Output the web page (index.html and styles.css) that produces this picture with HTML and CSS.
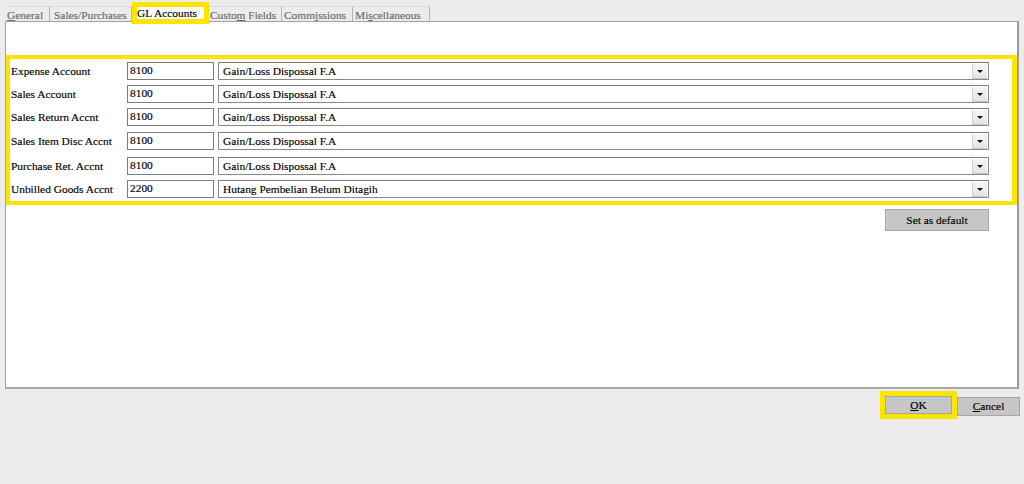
FILE: index.html
```html
<!DOCTYPE html>
<html>
<head>
  <meta charset="utf-8">
  <link rel="stylesheet" href="styles.css">
</head>
<body>
  <div class="dialog">
    <div class="tabs">
      <span class="tab tab-general"><u>G</u>eneral</span>
      <span class="tab tab-sales">Sales/Purchases</span>
      <span class="tab active">GL Accounts</span>
      <span class="tab tab-custom">Custo<u>m</u> Fields</span>
      <span class="tab tab-comm">Comm<u>i</u>ssions</span>
      <span class="tab tab-misc">Mi<u>s</u>cellaneous</span>
    </div>

    <div class="panel">
      <div class="gl-form">
        <div class="gl-row">
          <label>Expense Account</label>
          <div class="code">8100</div>
          <div class="combo"><span>Gain/Loss Dispossal F.A</span><span class="drop"></span></div>
        </div>
        <div class="gl-row">
          <label>Sales Account</label>
          <div class="code">8100</div>
          <div class="combo"><span>Gain/Loss Dispossal F.A</span><span class="drop"></span></div>
        </div>
        <div class="gl-row">
          <label>Sales Return Accnt</label>
          <div class="code">8100</div>
          <div class="combo"><span>Gain/Loss Dispossal F.A</span><span class="drop"></span></div>
        </div>
        <div class="gl-row step">
          <label>Sales Item Disc Accnt</label>
          <div class="code">8100</div>
          <div class="combo"><span>Gain/Loss Dispossal F.A</span><span class="drop"></span></div>
        </div>
        <div class="gl-row step2">
          <label>Purchase Ret. Accnt</label>
          <div class="code">8100</div>
          <div class="combo"><span>Gain/Loss Dispossal F.A</span><span class="drop"></span></div>
        </div>
        <div class="gl-row">
          <label>Unbilled Goods Accnt</label>
          <div class="code">2200</div>
          <div class="combo"><span>Hutang Pembelian Belum Ditagih</span><span class="drop"></span></div>
        </div>
      </div>

      <div class="panel-actions">
        <button class="btn btn-default">Set as default</button>
      </div>
    </div>

    <div class="footer">
      <span class="focus-ring"><button class="btn btn-ok"><u>O</u>K</button></span>
      <button class="btn btn-cancel"><u>C</u>ancel</button>
    </div>
  </div>
</body>
</html>
```

FILE: styles.css
```css
* {
  margin: 0;
  padding: 0;
  box-sizing: border-box;
}

body {
  background: #ececec;
  font-family: "Liberation Serif", "Times New Roman", serif;
  font-size: 11.4px;
  color: #000;
  -webkit-text-stroke: 0.15px;
}

.dialog {
  padding: 0 5px 0 5px;
}

/* tab strip */
.tabs {
  display: flex;
  align-items: flex-end;
  height: 21px;
}

.tab {
  height: 15px;
  line-height: 16px;
  padding-left: 2px;
  color: #6a6a6a;
  border-top: 1px solid #dcdcdc;
  border-right: 1px solid #b4b4b4;
  white-space: nowrap;
  overflow: hidden;
}

.tab-general { width: 45px; }
.tab-sales { width: 82px; padding-left: 4px; }
.tab-custom { width: 73px; padding-left: 1px; }
.tab-comm { width: 71px; }
.tab-misc { width: 77px; }

.tab u {
  text-decoration-thickness: 1px;
}

.tab.active {
  height: 22px;
  width: 77px;
  margin-bottom: -3px;
  padding: 0;
  line-height: 13px;
  color: #000;
  background: #fff;
  border: 5px solid #ffe400;
  position: relative;
  z-index: 1;
}

/* page body */
.panel {
  height: 368px;
  background: #fff;
  border: 1px solid #a2a2a2;
  border-bottom: 2px solid #a9a9a9;
  border-right: 2px solid #9c9c9c;
  padding-top: 33px;
}

.gl-form {
  border: 4px solid #ffe400;
  border-right-width: 5px;
  padding: 3px 23px 3px 0;
  display: flex;
  flex-direction: column;
  gap: 5px;
}

.gl-row {
  display: flex;
  align-items: center;
  height: 18px;
}

.gl-row.step {
  margin-top: 1px;
}

.gl-row.step2 {
  margin-top: 2px;
}

.gl-row label {
  width: 117px;
  padding-left: 1px;
  white-space: nowrap;
}

.code {
  width: 87px;
  height: 18px;
  border: 1px solid #7c7c7c;
  background: #fff;
  padding-left: 2px;
  line-height: 15px;
  margin-right: 4px;
}

.combo {
  flex: 1;
  height: 18px;
  border: 1px solid #8a8a8a;
  border-top-color: #7a7a7a;
  background: #fff;
  display: flex;
  align-items: center;
  justify-content: space-between;
  padding: 1px 1px 1px 4px;
}

.drop {
  width: 15px;
  height: 15px;
  background: linear-gradient(#f6f6f6, #e4e4e4);
  border-left: 1px solid #d0d0d0;
  border-bottom: 1px solid #c4c4c4;
  display: flex;
  align-items: center;
  justify-content: center;
}

.drop::after {
  content: "";
  border-left: 3px solid transparent;
  border-right: 3px solid transparent;
  border-top: 3px solid #111;
  margin-top: 1px;
}

.panel-actions {
  display: flex;
  justify-content: flex-end;
  padding: 4px 28px 0 0;
}

/* buttons */
.btn {
  font-family: inherit;
  font-size: 11.4px;
  color: #000;
  background: #c6c6c6;
  border: 1px solid #a6a6a6;
  cursor: pointer;
}

.btn-default {
  width: 104px;
  height: 22px;
}

.footer {
  display: flex;
  justify-content: flex-end;
  align-items: center;
  padding: 2px 0 0 0;
  margin-right: -1px;
}

.focus-ring {
  display: flex;
  border: 5px solid #ffe400;
}

.btn-ok {
  width: 67px;
  height: 18px;
  line-height: 14px;
}

.btn-cancel {
  width: 63px;
  height: 19px;
  line-height: 15px;
  margin-top: 2px;
}
```
